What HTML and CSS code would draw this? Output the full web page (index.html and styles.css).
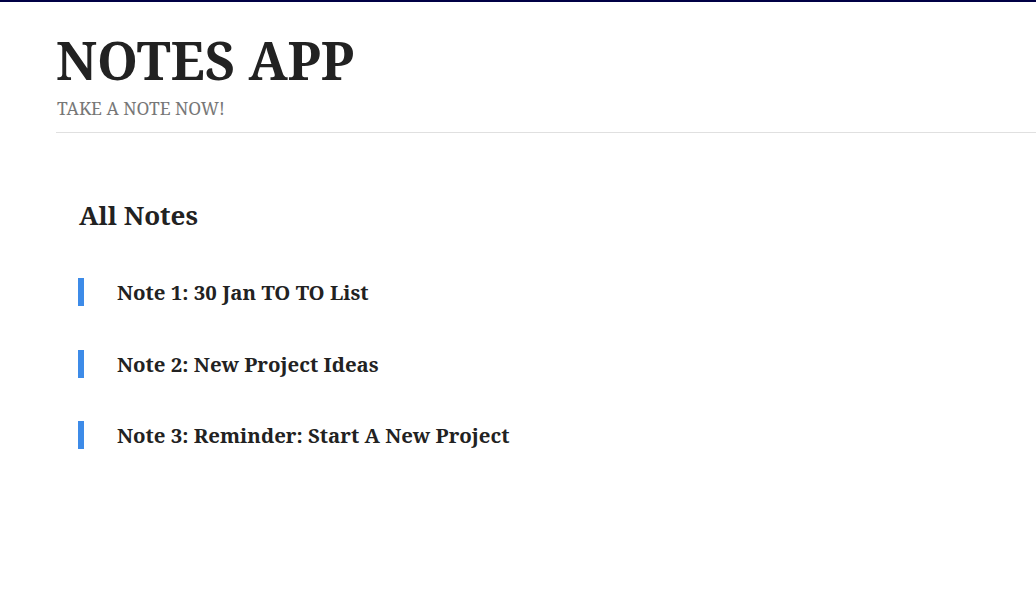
FILE: index.html
```html
<!DOCTYPE html>
<html>
<head>
<meta charset="utf-8">
<link rel="stylesheet" href="styles.css">
</head>
<body>
<div class="page">
  <header class="header">
    <h1 class="title">NOTES APP</h1>
    <p class="subtitle">TAKE A NOTE NOW!</p>
  </header>
  <main class="main">
    <h2 class="section-title">All Notes</h2>
    <ul class="notes">
      <li class="note">Note 1: 30 Jan TO TO List</li>
      <li class="note">Note 2: New Project Ideas</li>
      <li class="note">Note 3: Reminder: Start A New Project</li>
    </ul>
  </main>
</div>
</body>
</html>
```
FILE: styles.css
```css
html, body {
  margin: 0;
  padding: 0;
  background: #fff;
}
body {
  font-family: "Noto Serif", "DejaVu Serif", "Liberation Serif", serif;
  color: #222;
  border-top: 2px solid #000045;
}
.header {
  margin-left: 56px;
  padding-top: 26px;
  padding-bottom: 12px;
  border-bottom: 1px solid #e0e0e0;
}
.title {
  margin: 0;
  font-size: 52px;
  font-weight: 700;
  line-height: 64px;
  color: #222;
}
.subtitle {
  margin: 4px 0 0 1px;
  font-size: 17.4px;
  line-height: 24px;
  color: #777;
}
.main {
  padding: 62px 0 0 78px;
}
.section-title {
  margin: 0 0 43px 1px;
  font-size: 26px;
  line-height: 40px;
  font-weight: 700;
}
.notes {
  list-style: none;
  margin: 0;
  padding: 0;
  display: flex;
  flex-direction: column;
  gap: 43.5px;
}
.note {
  border-left: 6px solid #3d8be8;
  padding-left: 33px;
  font-size: 20.4px;
  font-weight: 700;
  line-height: 28px;
}
```
